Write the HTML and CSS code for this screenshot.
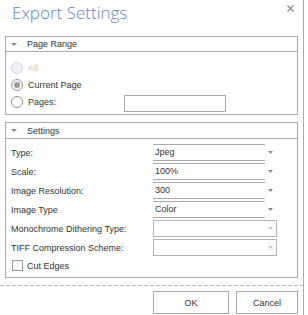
FILE: index.html
```html
<!DOCTYPE html>
<html>
<head>
<meta charset="utf-8">
<link rel="stylesheet" href="styles.css">
</head>
<body>
<div class="dialog">
  <div class="titlebar">
    <span class="title">Export Settings</span>
    <svg class="close" width="7" height="7" viewBox="0 0 7 7"><path d="M0.5 0.5L6.5 6.5M6.5 0.5L0.5 6.5" stroke="#8a8a8a" stroke-width="1.3"/></svg>
  </div>

  <div class="group">
    <div class="group-head">
      <svg class="caret" width="6" height="3" viewBox="0 0 6 3"><path d="M0 0H6L3 3Z" fill="#8a8a8a"/></svg>
      <span>Page Range</span>
    </div>
    <div class="group-body radios">
      <div class="radio-row disabled"><span class="radio"></span><span class="radio-text">All</span></div>
      <div class="radio-row"><span class="radio checked"></span><span class="radio-text">Current Page</span></div>
      <div class="radio-row"><span class="radio"></span><span class="radio-text pages-label">Pages:</span><span class="textbox"></span></div>
    </div>
  </div>

  <div class="group settings">
    <div class="group-head tall">
      <svg class="caret" width="6" height="3" viewBox="0 0 6 3"><path d="M0 0H6L3 3Z" fill="#8a8a8a"/></svg>
      <span>Settings</span>
    </div>
    <div class="group-body fields">
      <div class="field"><span class="label">Type:</span>
        <span class="select flat"><span class="value">Jpeg</span><svg class="arrow" width="5" height="3" viewBox="0 0 5 3"><path d="M0 0H5L2.5 3Z" fill="#8a8a8a"/></svg></span></div>
      <div class="field"><span class="label">Scale:</span>
        <span class="select flat"><span class="value">100%</span><svg class="arrow" width="5" height="3" viewBox="0 0 5 3"><path d="M0 0H5L2.5 3Z" fill="#8a8a8a"/></svg></span></div>
      <div class="field"><span class="label">Image Resolution:</span>
        <span class="select flat"><span class="value">300</span><svg class="arrow" width="5" height="3" viewBox="0 0 5 3"><path d="M0 0H5L2.5 3Z" fill="#8a8a8a"/></svg></span></div>
      <div class="field"><span class="label">Image Type</span>
        <span class="select flat"><span class="value">Color</span><svg class="arrow" width="5" height="3" viewBox="0 0 5 3"><path d="M0 0H5L2.5 3Z" fill="#8a8a8a"/></svg></span></div>
      <div class="field"><span class="label">Monochrome Dithering Type:</span>
        <span class="select boxed"><span class="value"></span><svg class="arrow" width="5" height="3" viewBox="0 0 5 3"><path d="M0 0H5L2.5 3Z" fill="#c4c4c4"/></svg></span></div>
      <div class="field"><span class="label">TIFF Compression Scheme:</span>
        <span class="select boxed"><span class="value"></span><svg class="arrow" width="5" height="3" viewBox="0 0 5 3"><path d="M0 0H5L2.5 3Z" fill="#c4c4c4"/></svg></span></div>
      <div class="check-row"><span class="checkbox"></span><span class="check-text">Cut Edges</span></div>
    </div>
  </div>

  <div class="dash"></div>

  <div class="footer">
    <button class="btn ok">OK</button>
    <button class="btn cancel">Cancel</button>
  </div>
</div>
</body>
</html>
```

FILE: styles.css
```css
html, body {
  margin: 0;
  padding: 0;
  background: #fff;
}
body {
  font-family: "Liberation Sans", Arial, sans-serif;
  font-size: 9px;
  color: #333;
}
.dialog {
  width: 303px;
  height: 315px;
  border-right: 1px solid #aaa;
  overflow: hidden;
}
.titlebar {
  height: 36px;
  display: flex;
  justify-content: space-between;
  align-items: flex-start;
}
.title {
  font-family: "Open Sans", "Noto Sans", sans-serif;
  font-size: 17px;
  font-weight: 300;
  line-height: 23px;
  padding: 1px 0 0 12px;
  color: #5f86c6;
}
.close {
  margin: 5px 9px 0 0;
}
.group {
  margin: 0 5px 0 5px;
  border: 1px solid #aaa;
}
.group-head {
  height: 14px;
  border-bottom: 1px solid #aaa;
  display: flex;
  align-items: center;
  padding-left: 5px;
}
.group-head.tall {
  height: 15px;
}
.caret {
  margin-right: 10px;
}
.radios {
  padding: 7px 5px 4px 5px;
}
.radio-row {
  height: 17px;
  display: flex;
  align-items: center;
}
.radio {
  width: 12px;
  height: 12px;
  box-sizing: border-box;
  border: 1px solid #8c8c8c;
  border-radius: 50%;
  background: #fff;
  display: flex;
  align-items: center;
  justify-content: center;
}
.radio.checked {
  border-color: #9a9a9a;
  background: #f4f4f4;
}
.radio.checked::after {
  content: "";
  width: 6px;
  height: 6px;
  border-radius: 50%;
  background: #999;
}
.radio-row.disabled .radio {
  border-color: #d9d7df;
  background: #f2f0f5;
}
.radio-row.disabled .radio-text {
  color: #c8c8c8;
}
.radio-text {
  margin-left: 5px;
}
.pages-label {
  width: 96px;
}
.textbox {
  align-self: flex-start;
  margin-top: 2px;
  width: 102px;
  height: 17px;
  box-sizing: border-box;
  border: 1px solid #aaa;
  background: #fff;
}
.settings {
  margin-top: 7px;
}
.fields {
  padding: 4px 5px 3px 5px;
}
.field {
  height: 19px;
  display: flex;
  align-items: center;
}
.label {
  width: 142px;
  white-space: nowrap;
}
.select {
  width: 124px;
  height: 17px;
  box-sizing: border-box;
  display: flex;
  align-items: center;
}
.select .value {
  padding-left: 2px;
  line-height: 15px;
}
.select.flat .value {
  width: 112px;
  height: 17px;
  box-sizing: border-box;
  border-top: 1px solid #aaa;
  border-bottom: 1px solid #aaa;
}
.select.flat .arrow {
  margin-left: 3px;
}
.select.boxed {
  border: 1px solid #b4b4b4;
  justify-content: space-between;
  padding-right: 3px;
}
.check-row {
  height: 17px;
  display: flex;
  align-items: center;
}
.checkbox {
  width: 11px;
  height: 11px;
  box-sizing: border-box;
  border: 1px solid #999;
  margin-left: 1px;
  background: #fff;
}
.check-text {
  margin-left: 4px;
}
.dash {
  margin-top: 7px;
  height: 1px;
  background: repeating-linear-gradient(to right, #bcbcbc 0 4px, transparent 4px 6px);
}
.footer {
  display: flex;
  justify-content: flex-end;
  gap: 7px;
  padding: 5px 5px 0 0;
}
.btn {
  height: 23px;
  box-sizing: border-box;
  border: 1px solid #a8a8a8;
  background: #fff;
  font-family: "Liberation Sans", Arial, sans-serif;
  font-size: 9px;
  color: #333;
  padding: 0;
  margin: 0;
}
.btn.ok {
  width: 76px;
}
.btn.cancel {
  width: 62px;
}
```
